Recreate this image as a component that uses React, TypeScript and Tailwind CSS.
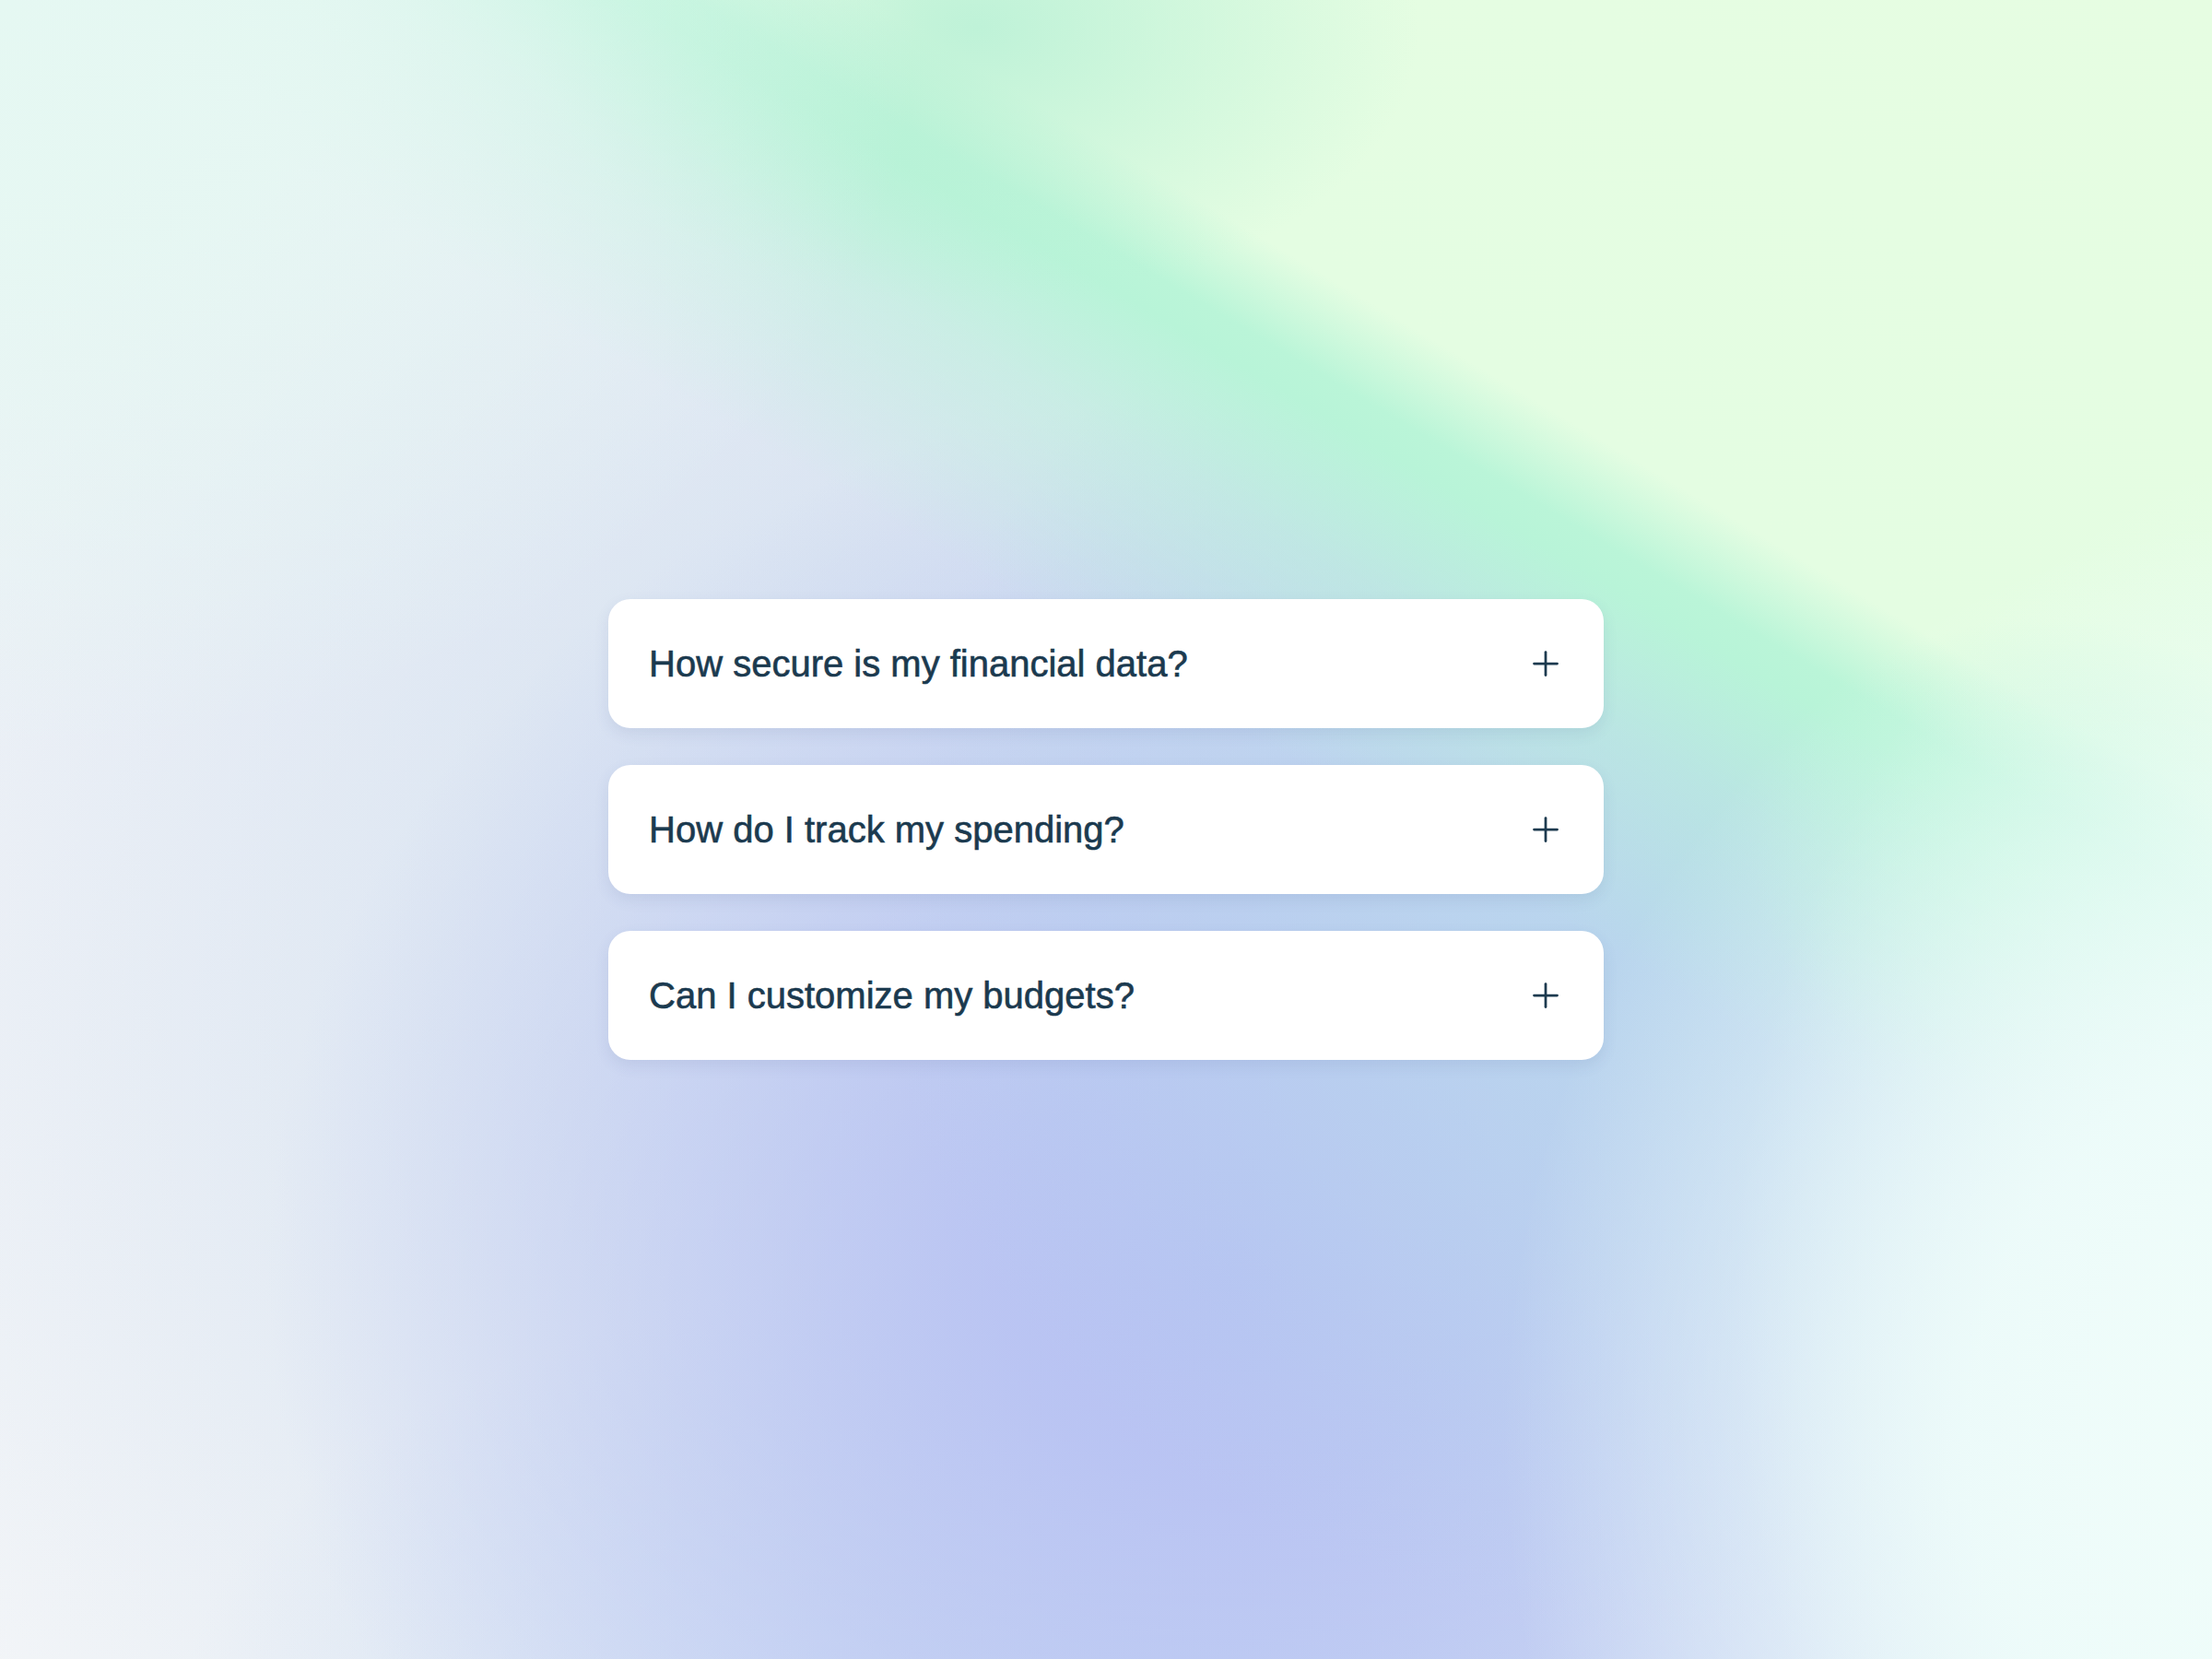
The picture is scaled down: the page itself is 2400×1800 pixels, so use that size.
import React from "react";

const items = [
  "How secure is my financial data?",
  "How do I track my spending?",
  "Can I customize my budgets?",
];

function Plus() {
  return (
    <svg width="28" height="28" viewBox="0 0 28 28" fill="none" className="shrink-0">
      <line x1="14" y1="1.5" x2="14" y2="26.5" stroke="#1d3a4f" strokeWidth="2.75" strokeLinecap="round" />
      <line x1="1.5" y1="14" x2="26.5" y2="14" stroke="#1d3a4f" strokeWidth="2.75" strokeLinecap="round" />
    </svg>
  );
}

export default function App() {
  return (
    <div className="relative min-h-screen w-full overflow-hidden bg-[#f1f3f8] bg-[radial-gradient(ellipse_1000px_820px_at_0px_0px,rgba(229,248,242,1)_0%,rgba(229,248,242,0.85)_35%,rgba(229,248,242,0)_100%),radial-gradient(ellipse_850px_1000px_at_2480px_1560px,rgba(240,253,250,1)_0%,rgba(238,252,250,0.92)_40%,rgba(238,252,250,0)_100%),radial-gradient(ellipse_700px_950px_at_2580px_1420px,rgba(236,252,246,0.95)_0%,rgba(236,252,246,0.7)_40%,rgba(236,252,246,0)_100%),radial-gradient(ellipse_320px_260px_at_2220px_930px,rgba(184,244,216,0.9)_0%,rgba(184,244,216,0)_100%),radial-gradient(ellipse_480px_300px_at_1060px_30px,rgba(184,240,214,0.85)_0%,rgba(184,240,214,0)_100%),linear-gradient(30.8deg,rgba(184,244,216,0)_0%,rgba(184,244,216,0)_56%,rgba(184,244,216,0.5)_63.5%,rgba(184,244,216,1)_68.3%,rgba(186,245,216,1)_69.6%,rgba(228,253,226,1)_73%,rgba(230,253,226,1)_100%),radial-gradient(ellipse_900px_800px_at_1850px_980px,rgba(184,214,237,1)_0%,rgba(184,214,237,0.6)_45%,rgba(184,214,237,0)_100%),radial-gradient(ellipse_1050px_950px_at_1340px_1380px,rgba(182,192,243,1)_0%,rgba(182,192,243,0.85)_25%,rgba(182,192,243,0)_100%),radial-gradient(ellipse_1100px_500px_at_1300px_1850px,rgba(196,214,243,0.9)_0%,rgba(196,214,243,0)_100%),radial-gradient(ellipse_1700px_1500px_at_1400px_1100px,rgba(196,214,236,0.9)_0%,rgba(196,214,236,0)_100%),linear-gradient(180deg,#eef1f7_0%,#f4f6f8_100%)]">
      <div className="flex min-h-screen w-full items-center justify-center">
        <div className="flex w-[1080px] flex-col gap-[40px]">
          {items.map((q) => (
            <div
              key={q}
              className="flex h-[140px] items-center justify-between rounded-[24px] bg-white pl-[44px] pr-[49px] shadow-[0_6px_16px_rgba(60,80,140,0.10)]"
            >
              <span className="font-['Liberation_Sans',Arial,sans-serif] text-[40px] leading-none text-[#1b3a4f] [-webkit-text-stroke:0.6px_#1b3a4f]">
                {q}
              </span>
              <Plus />
            </div>
          ))}
        </div>
      </div>
    </div>
  );
}
